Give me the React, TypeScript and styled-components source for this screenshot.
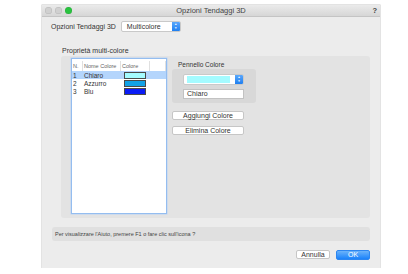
import styled, { createGlobalStyle } from 'styled-components';

const GlobalStyle = createGlobalStyle`
  html, body {
    margin: 0;
    padding: 0;
    background: #ffffff;
  }
  body {
    font-family: "Liberation Sans", Arial, sans-serif;
    color: #333;
  }
`;

const Window = styled.div`
  margin: 5px 0 0 42px;
  width: 338px;
  height: 263px;
  background: #ececec;
  box-shadow: 0 0 0 0.5px #c8c8c8;
  display: flex;
  flex-direction: column;
  font-size: 7px;
`;

const TitleBar = styled.div`
  height: 11px;
  display: grid;
  grid-template-columns: 40px 1fr 40px;
  align-items: center;
  background: linear-gradient(#ebebeb, #d6d6d6);
  border-bottom: 1px solid #c4c4c4;
`;

const Lights = styled.div`
  display: flex;
  gap: 3px;
  padding-left: 3px;
`;

const Light = styled.span<{ $c: string }>`
  width: 7px;
  height: 7px;
  border-radius: 50%;
  background: ${(p) => p.$c};
  box-shadow: inset 0 0 0 0.5px rgba(0, 0, 0, 0.12);
`;

const Title = styled.div`
  text-align: center;
  font-size: 7.5px;
  color: #444;
`;

const Help = styled.div`
  text-align: right;
  padding-right: 3px;
  font-weight: bold;
  font-size: 7.5px;
  color: #444;
`;

const Body = styled.div`
  flex: 1;
  display: flex;
  flex-direction: column;
  padding: 3px 10px 0 9px;
`;

const TopRow = styled.div`
  display: flex;
  align-items: center;
  gap: 5px;
  height: 12px;
`;

const PopUp = styled.div<{ $w: number }>`
  width: ${(p) => p.$w}px;
  height: 11px;
  box-sizing: border-box;
  background: #fff;
  border: 1px solid #c9c9c9;
  border-radius: 2px;
  display: flex;
  align-items: center;
  justify-content: space-between;
  padding-left: 5px;
  overflow: hidden;
`;

const Stepper = styled.div`
  width: 8px;
  height: 100%;
  background: linear-gradient(#5aa7fb, #1f7ff0);
  display: flex;
  flex-direction: column;
  align-items: center;
  justify-content: center;
  gap: 1px;
  color: #fff;
  font-size: 3px;
  line-height: 3px;
`;

const GroupLabel = styled.div`
  margin: 14px 0 0 11px;
  height: 10px;
  line-height: 10px;
`;

const GroupBox = styled.div`
  margin-left: 10px;
  height: 162px;
  background: #e3e3e3;
  border-radius: 3px;
  display: flex;
  padding: 2px 0 0 10px;
  box-sizing: border-box;
`;

const ListBox = styled.div`
  width: 96px;
  height: 156px;
  box-sizing: border-box;
  background: #fff;
  border: 1px solid #94bdf0;
  box-shadow: 0 0 0 0.5px #b9d3f5;
  padding-top: 2px;
`;

const Row = styled.div<{ $head?: boolean; $sel?: boolean }>`
  display: grid;
  grid-template-columns: 11px 38px 29px 16px;
  height: ${(p) => (p.$head ? 10 : 8)}px;
  align-items: center;
  background: ${(p) => (p.$sel ? '#b4d5fc' : 'transparent')};
  font-size: ${(p) => (p.$head ? 5.5 : 6.5)}px;
  color: ${(p) => (p.$head ? '#666' : '#333')};
  & > span {
    padding-left: 1px;
    border-right: ${(p) => (p.$head ? '1px solid #e0e0e0' : 'none')};
    height: 100%;
    display: flex;
    align-items: center;
  }
`;

const Swatch = styled.i<{ $c: string }>`
  display: block;
  width: 22px;
  height: 7px;
  box-sizing: border-box;
  margin-left: 2px;
  background: ${(p) => p.$c};
  border: 1px solid #4a4a4a;
`;

const RightCol = styled.div`
  display: flex;
  flex-direction: column;
  margin-left: 5px;
  padding-top: 3px;
`;

const PanelLabel = styled.div`
  margin-left: 6px;
  height: 8px;
  line-height: 8px;
  font-size: 6.5px;
`;

const Panel = styled.div`
  width: 84px;
  height: 34px;
  box-sizing: border-box;
  background: #d8d8d8;
  border-radius: 3px;
  padding: 5px 0 0 11px;
  display: flex;
  flex-direction: column;
  gap: 4px;
`;

const ColorFill = styled.div`
  flex: 1;
  height: 7px;
  margin-right: 5px;
  margin-left: -2px;
  background: #a4fbff;
`;

const TextField = styled.div`
  width: 61px;
  height: 10px;
  box-sizing: border-box;
  background: #fff;
  border: 1px solid #c2c2c2;
  padding-left: 3px;
  line-height: 8px;
`;

const PushButton = styled.div<{ $primary?: boolean; $w: number }>`
  width: ${(p) => p.$w}px;
  height: ${(p) => (p.$primary ? 10 : 9)}px;
  box-sizing: border-box;
  border-radius: 2px;
  background: ${(p) => (p.$primary ? 'linear-gradient(#6cb3fa, #1a82fb)' : '#fff')};
  border: 1px solid ${(p) => (p.$primary ? '#2d86f0' : '#c6c6c6')};
  color: ${(p) => (p.$primary ? '#fff' : '#333')};
  text-align: center;
  line-height: ${(p) => (p.$primary ? 8 : 7)}px;
`;

const ButtonStack = styled.div`
  display: flex;
  flex-direction: column;
  gap: 6px;
  margin-top: 8px;
`;

const HelpBar = styled.div`
  margin: 9px 0 0 1px;
  height: 14px;
  background: #e0e0e0;
  border-radius: 3px;
  display: flex;
  align-items: center;
  padding-left: 3px;
  font-size: 5.5px;
  color: #444;
`;

const Footer = styled.div`
  display: flex;
  justify-content: flex-end;
  align-items: flex-start;
  gap: 6px;
  margin-top: 9px;
`;

const rows = [
  { n: '1', name: 'Chiaro', color: '#a4fbff', sel: true },
  { n: '2', name: 'Azzurro', color: '#12a2e6' },
  { n: '3', name: 'Blu', color: '#0a1cf5' },
];

export default function App() {
  return (
    <>
      <GlobalStyle />
      <Window>
        <TitleBar>
          <Lights>
            <Light $c="#d0d0d0" />
            <Light $c="#d0d0d0" />
            <Light $c="#29c33f" />
          </Lights>
          <Title>Opzioni Tendaggi 3D</Title>
          <Help>?</Help>
        </TitleBar>
        <Body>
          <TopRow>
            <span>Opzioni Tendaggi 3D</span>
            <PopUp $w={60}>
              <span>Multicolore</span>
              <Stepper>
                <span>▲</span>
                <span>▼</span>
              </Stepper>
            </PopUp>
          </TopRow>
          <GroupLabel>Proprietà multi-colore</GroupLabel>
          <GroupBox>
            <ListBox>
              <Row $head>
                <span>N.</span>
                <span>Nome Colore</span>
                <span>Colore</span>
                <span />
              </Row>
              {rows.map((r) => (
                <Row key={r.n} $sel={r.sel}>
                  <span>{r.n}</span>
                  <span>{r.name}</span>
                  <span>
                    <Swatch $c={r.color} />
                  </span>
                </Row>
              ))}
            </ListBox>
            <RightCol>
              <PanelLabel>Pennello Colore</PanelLabel>
              <Panel>
                <PopUp $w={61}>
                  <ColorFill />
                  <Stepper>
                    <span>▲</span>
                    <span>▼</span>
                  </Stepper>
                </PopUp>
                <TextField>Chiaro</TextField>
              </Panel>
              <ButtonStack>
                <PushButton $w={72}>Aggiungi Colore</PushButton>
                <PushButton $w={72}>Elimina Colore</PushButton>
              </ButtonStack>
            </RightCol>
          </GroupBox>
          <HelpBar>Per visualizzare l'Aiuto, premere F1 o fare clic sull'icona ?</HelpBar>
          <Footer>
            <PushButton $w={34}>Annulla</PushButton>
            <PushButton $w={34} $primary>
              OK
            </PushButton>
          </Footer>
        </Body>
      </Window>
    </>
  );
}
